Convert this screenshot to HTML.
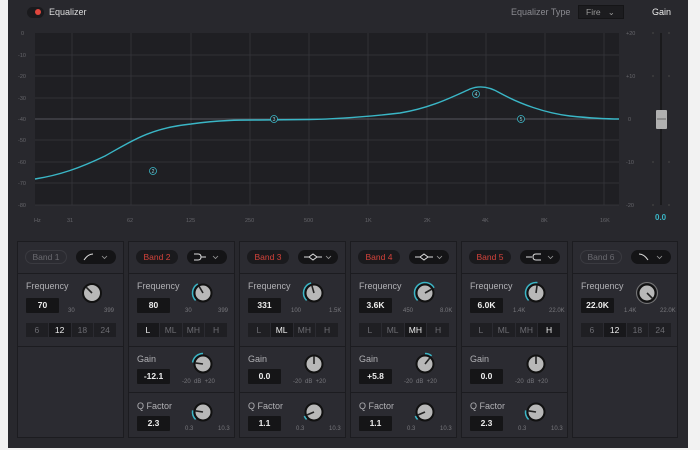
<!DOCTYPE html>
<html><head><meta charset="utf-8"><style>
*{margin:0;padding:0;box-sizing:border-box}
body{width:700px;height:450px;background:#f2f2f2;position:relative;overflow:hidden;font-family:"Liberation Sans",sans-serif}
#p{position:absolute;left:8px;top:0;width:680px;height:448px;background:#28282d}
.a{position:absolute}
.band{position:absolute;top:241px;width:107px;height:197px;background:#2b2b31;border:1px solid #1c1c20}
.sec{position:absolute;left:0;width:105px;border-top:1px solid #1c1c20}
.pill{position:absolute;left:7px;top:8px;width:42px;height:14px;border-radius:7px;background:#1a1a1d;color:#d4433b;font-size:8.5px;text-align:center;line-height:14px}
.pill.off{background:transparent;border:1px solid #3a3a40;color:#6a6a70;line-height:12px}
.drop{position:absolute;left:58px;top:8px;width:40px;height:14px;border-radius:7px;background:#141416}
.lbl{position:absolute;left:8px;font-size:9px;color:#b0b0b4}
.val{position:absolute;left:8px;width:33px;height:15px;background:#151517;color:#eee;font-size:8.5px;font-weight:bold;text-align:center;line-height:15px;border-radius:1px}
.rng{position:absolute;font-size:6px;color:#77777c}
.row{position:absolute;left:8px;top:81px;width:91px;height:14px;background:#1f1f23;display:flex}
.row span{flex:1;text-align:center;font-size:8.5px;line-height:14px;color:#6c6c72;border-right:1px solid #2b2b31}
.row span.on{background:#18181b;color:#eee}
.k{position:absolute;width:26px;height:26px}
</style></head><body>
<div id="p">
<div class="a" style="left:19px;top:7px;width:17px;height:11px;border-radius:6px;background:#1a1a1d"></div>
<div class="a" style="left:27px;top:9px;width:6px;height:6px;border-radius:3px;background:#e0463d"></div>
<div class="a" style="left:41px;top:7px;font-size:9px;color:#ddd">Equalizer</div>
<div class="a" style="left:503px;top:7px;font-size:9px;color:#8a8a90">Equalizer Type</div>
<div class="a" style="left:570px;top:5px;width:46px;height:14px;background:#1c1c1f;border:1px solid #151517;font-size:8.5px;color:#999;line-height:12px;padding-left:7px">Fire &nbsp;&nbsp;⌄</div>
<div class="a" style="left:644px;top:7px;font-size:9px;color:#eee">Gain</div>
</div>
<svg class="a" style="left:0;top:0" width="700" height="240" font-family="Liberation Sans" font-size="5.5" fill="#66666b">
<rect x="35" y="33" width="584" height="172" fill="#1f1f23"/>
<g stroke="#38383e" stroke-width="0.7">
<line x1="35" y1="55" x2="619" y2="55"/><line x1="35" y1="76" x2="619" y2="76"/><line x1="35" y1="98" x2="619" y2="98"/><line x1="35" y1="140" x2="619" y2="140"/><line x1="35" y1="162" x2="619" y2="162"/><line x1="35" y1="183" x2="619" y2="183"/><line x1="35" y1="205" x2="619" y2="205"/>
<line x1="72" y1="33" x2="72" y2="205"/><line x1="131" y1="33" x2="131" y2="205"/><line x1="191" y1="33" x2="191" y2="205"/><line x1="250" y1="33" x2="250" y2="205"/><line x1="309" y1="33" x2="309" y2="205"/><line x1="368" y1="33" x2="368" y2="205"/><line x1="427" y1="33" x2="427" y2="205"/><line x1="486" y1="33" x2="486" y2="205"/><line x1="545" y1="33" x2="545" y2="205"/><line x1="604" y1="33" x2="604" y2="205"/>
</g>
<line x1="35" y1="119" x2="619" y2="119" stroke="#6a6a70" stroke-width="0.8"/>
<g><text x="21" y="35">0</text><text x="18" y="57">-10</text><text x="18" y="78">-20</text><text x="18" y="100">-30</text><text x="18" y="121">-40</text><text x="18" y="142">-50</text><text x="18" y="164">-60</text><text x="18" y="185">-70</text><text x="18" y="207">-80</text>
<text x="34" y="222">Hz</text><text x="67" y="222">31</text><text x="127" y="222">62</text><text x="186" y="222">125</text><text x="245" y="222">250</text><text x="304" y="222">500</text><text x="365" y="222">1K</text><text x="424" y="222">2K</text><text x="482" y="222">4K</text><text x="541" y="222">8K</text><text x="600" y="222">16K</text>
<text x="626" y="35">+20</text><text x="626" y="78">+10</text><text x="628" y="121">0</text><text x="626" y="164">-10</text><text x="626" y="207">-20</text></g>
<path d="M35 179 C60 175 80 168 105 156 C130 142 150 128 191 124 C220 120 240 120 260 120 L309 119.5 C340 119 365 117 400 113 C430 108 450 98 470 89 C480 85 490 87 500 93 C520 104 545 113 570 116 C590 118 605 119 619 119" fill="none" stroke="#3ab6c6" stroke-width="1.4"/>
<g fill="#1f1f23" stroke="#3ab6c6" stroke-width="0.8" font-size="5" text-anchor="middle"><circle cx="153" cy="171" r="3.5"/><circle cx="274" cy="119" r="3.5"/><circle cx="476" cy="94" r="3.5"/><circle cx="521" cy="119" r="3.5"/></g>
<g fill="#8fd6df" font-size="5" text-anchor="middle"><text x="153" y="173">2</text><text x="274" y="121">3</text><text x="476" y="96">4</text><text x="521" y="121">5</text></g>
<line x1="661" y1="33" x2="661" y2="205" stroke="#151517" stroke-width="1.5"/>
<g stroke="#555" stroke-width="0.7"><line x1="652" y1="33" x2="654" y2="33"/><line x1="668" y1="33" x2="670" y2="33"/><line x1="652" y1="76" x2="654" y2="76"/><line x1="668" y1="76" x2="670" y2="76"/><line x1="652" y1="162" x2="654" y2="162"/><line x1="668" y1="162" x2="670" y2="162"/><line x1="652" y1="205" x2="654" y2="205"/><line x1="668" y1="205" x2="670" y2="205"/></g>
<rect x="656" y="110" width="11" height="19" rx="1" fill="#b0b0b0"/><line x1="657" y1="119" x2="666" y2="119" stroke="#666" stroke-width="1"/>
<text x="655" y="220" fill="#3ab6c6" font-size="8" font-weight="bold">0.0</text>
</svg>

<!-- Band 1 -->
<div class="band" style="left:17px">
<div class="pill off">Band 1</div><div class="drop"><svg width="40" height="14"><path d="M8 10 Q12 4 17 4" stroke="#ddd" fill="none" stroke-width="1"/><path d="M26 6 L28.5 8.5 L31 6" stroke="#999" fill="none" stroke-width="0.8"/></svg></div>
<div class="sec" style="top:31px;height:73px"></div>
<div class="lbl" style="top:39px">Frequency</div><div class="val" style="top:56px">70</div>
<svg class="k" style="left:61px;top:38px"><circle cx="13" cy="13" r="9" fill="#b8b8b8" stroke="#111" stroke-width="2"/><line x1="13" y1="13" x2="7.3" y2="7.3" stroke="#222" stroke-width="1.6"/></svg>
<div class="rng" style="top:66px;left:50px">30</div><div class="rng" style="top:66px;left:86px">399</div>
<div class="row"><span>6</span><span class="on">12</span><span>18</span><span>24</span></div>
<div class="sec" style="top:104px;height:92px"></div>
</div>

<!-- Band 2 -->
<div class="band" style="left:128px">
<div class="pill">Band 2</div><div class="drop"><svg width="40" height="14"><path d="M7 4 H11 Q14 4 14 7 Q14 10 11 10 H7 M14 7 H19" stroke="#ddd" fill="none" stroke-width="1"/><path d="M26 6 L28.5 8.5 L31 6" stroke="#999" fill="none" stroke-width="0.8"/></svg></div>
<div class="sec" style="top:31px;height:73px"></div>
<div class="lbl" style="top:39px">Frequency</div><div class="val" style="top:56px">80</div>
<svg class="k" style="left:61px;top:38px"><path d="M5.58 20.42 A10.5 10.5 0 0 1 7.75 3.91" stroke="#3ab6c6" fill="none" stroke-width="1.5"/><circle cx="13" cy="13" r="8.5" fill="#b8b8b8" stroke="#111" stroke-width="2"/><line x1="13" y1="13" x2="9" y2="6.1" stroke="#222" stroke-width="1.6"/></svg>
<div class="rng" style="top:66px;left:56px">30</div><div class="rng" style="top:66px;left:89px">399</div>
<div class="row"><span class="on">L</span><span>ML</span><span>MH</span><span>H</span></div>
<div class="sec" style="top:104px;height:46px"></div>
<div class="lbl" style="top:112px">Gain</div><div class="val" style="top:127px">-12.1</div>
<svg class="k" style="left:61px;top:109px"><path d="M13 2.5 A10.5 10.5 0 0 0 2.6 11.54" stroke="#3ab6c6" fill="none" stroke-width="1.5"/><circle cx="13" cy="13" r="8.5" fill="#b8b8b8" stroke="#111" stroke-width="2"/><line x1="13" y1="13" x2="5.1" y2="11.9" stroke="#222" stroke-width="1.6"/></svg>
<div class="rng" style="top:137px;left:53px">-20 &nbsp;dB &nbsp;+20</div>
<div class="sec" style="top:150px;height:46px"></div>
<div class="lbl" style="top:159px">Q Factor</div><div class="val" style="top:174px">2.3</div>
<svg class="k" style="left:61px;top:157px"><path d="M5.58 20.42 A10.5 10.5 0 0 1 2.63 11.36" stroke="#3ab6c6" fill="none" stroke-width="1.5"/><circle cx="13" cy="13" r="8.5" fill="#b8b8b8" stroke="#111" stroke-width="2"/><line x1="13" y1="13" x2="5.1" y2="11.8" stroke="#222" stroke-width="1.6"/></svg>
<div class="rng" style="top:184px;left:56px">0.3</div><div class="rng" style="top:184px;left:89px">10.3</div>
</div>

<!-- Band 3 -->
<div class="band" style="left:239px">
<div class="pill">Band 3</div><div class="drop"><svg width="40" height="14"><path d="M6 7 H11 M19 7 H24" stroke="#ddd" stroke-width="1"/><path d="M11 7 L15 4 L19 7 L15 10 Z" stroke="#ddd" fill="none" stroke-width="1"/><path d="M28 6 L30.5 8.5 L33 6" stroke="#999" fill="none" stroke-width="0.8"/></svg></div>
<div class="sec" style="top:31px;height:73px"></div>
<div class="lbl" style="top:39px">Frequency</div><div class="val" style="top:56px">331</div>
<svg class="k" style="left:61px;top:38px"><path d="M5.58 20.42 A10.5 10.5 0 0 1 10.1 2.91" stroke="#3ab6c6" fill="none" stroke-width="1.5"/><circle cx="13" cy="13" r="8.5" fill="#b8b8b8" stroke="#111" stroke-width="2"/><line x1="13" y1="13" x2="10.8" y2="5.3" stroke="#222" stroke-width="1.6"/></svg>
<div class="rng" style="top:66px;left:51px">100</div><div class="rng" style="top:66px;left:89px">1.5K</div>
<div class="row"><span>L</span><span class="on">ML</span><span>MH</span><span>H</span></div>
<div class="sec" style="top:104px;height:46px"></div>
<div class="lbl" style="top:112px">Gain</div><div class="val" style="top:127px">0.0</div>
<svg class="k" style="left:61px;top:109px"><circle cx="13" cy="13" r="8.5" fill="#b8b8b8" stroke="#111" stroke-width="2"/><line x1="13" y1="13" x2="13" y2="5" stroke="#222" stroke-width="1.6"/></svg>
<div class="rng" style="top:137px;left:53px">-20 &nbsp;dB &nbsp;+20</div>
<div class="sec" style="top:150px;height:46px"></div>
<div class="lbl" style="top:159px">Q Factor</div><div class="val" style="top:174px">1.1</div>
<svg class="k" style="left:61px;top:157px"><path d="M5.58 20.42 A10.5 10.5 0 0 1 3.33 17.1" stroke="#3ab6c6" fill="none" stroke-width="1.5"/><circle cx="13" cy="13" r="8.5" fill="#b8b8b8" stroke="#111" stroke-width="2"/><line x1="13" y1="13" x2="5.6" y2="16.1" stroke="#222" stroke-width="1.6"/></svg>
<div class="rng" style="top:184px;left:56px">0.3</div><div class="rng" style="top:184px;left:89px">10.3</div>
</div>

<!-- Band 4 -->
<div class="band" style="left:350px">
<div class="pill">Band 4</div><div class="drop"><svg width="40" height="14"><path d="M6 7 H11 M19 7 H24" stroke="#ddd" stroke-width="1"/><path d="M11 7 L15 4 L19 7 L15 10 Z" stroke="#ddd" fill="none" stroke-width="1"/><path d="M28 6 L30.5 8.5 L33 6" stroke="#999" fill="none" stroke-width="0.8"/></svg></div>
<div class="sec" style="top:31px;height:73px"></div>
<div class="lbl" style="top:39px">Frequency</div><div class="val" style="top:56px">3.6K</div>
<svg class="k" style="left:61px;top:38px"><path d="M5.58 20.42 A10.5 10.5 0 1 1 22.09 7.75" stroke="#3ab6c6" fill="none" stroke-width="1.5"/><circle cx="13" cy="13" r="8.5" fill="#b8b8b8" stroke="#111" stroke-width="2"/><line x1="13" y1="13" x2="19.9" y2="9" stroke="#222" stroke-width="1.6"/></svg>
<div class="rng" style="top:66px;left:52px">450</div><div class="rng" style="top:66px;left:89px">8.0K</div>
<div class="row"><span>L</span><span>ML</span><span class="on">MH</span><span>H</span></div>
<div class="sec" style="top:104px;height:46px"></div>
<div class="lbl" style="top:112px">Gain</div><div class="val" style="top:127px">+5.8</div>
<svg class="k" style="left:61px;top:109px"><path d="M13 2.5 A10.5 10.5 0 0 1 19.61 4.84" stroke="#3ab6c6" fill="none" stroke-width="1.5"/><circle cx="13" cy="13" r="8.5" fill="#b8b8b8" stroke="#111" stroke-width="2"/><line x1="13" y1="13" x2="18" y2="6.8" stroke="#222" stroke-width="1.6"/></svg>
<div class="rng" style="top:137px;left:53px">-20 &nbsp;dB &nbsp;+20</div>
<div class="sec" style="top:150px;height:46px"></div>
<div class="lbl" style="top:159px">Q Factor</div><div class="val" style="top:174px">1.1</div>
<svg class="k" style="left:61px;top:157px"><path d="M5.58 20.42 A10.5 10.5 0 0 1 3.33 17.1" stroke="#3ab6c6" fill="none" stroke-width="1.5"/><circle cx="13" cy="13" r="8.5" fill="#b8b8b8" stroke="#111" stroke-width="2"/><line x1="13" y1="13" x2="5.6" y2="16.1" stroke="#222" stroke-width="1.6"/></svg>
<div class="rng" style="top:184px;left:56px">0.3</div><div class="rng" style="top:184px;left:89px">10.3</div>
</div>

<!-- Band 5 -->
<div class="band" style="left:461px">
<div class="pill">Band 5</div><div class="drop"><svg width="40" height="14"><path d="M6 7 H12 M21 4 H16 Q13 4 13 7 Q13 10 16 10 H21" stroke="#ddd" fill="none" stroke-width="1"/><path d="M28 6 L30.5 8.5 L33 6" stroke="#999" fill="none" stroke-width="0.8"/></svg></div>
<div class="sec" style="top:31px;height:73px"></div>
<div class="lbl" style="top:39px">Frequency</div><div class="val" style="top:56px">6.0K</div>
<svg class="k" style="left:61px;top:38px"><path d="M5.58 20.42 A10.5 10.5 0 0 1 14.46 2.6" stroke="#3ab6c6" fill="none" stroke-width="1.5"/><circle cx="13" cy="13" r="8.5" fill="#b8b8b8" stroke="#111" stroke-width="2"/><line x1="13" y1="13" x2="14.1" y2="5.1" stroke="#222" stroke-width="1.6"/></svg>
<div class="rng" style="top:66px;left:51px">1.4K</div><div class="rng" style="top:66px;left:87px">22.0K</div>
<div class="row"><span>L</span><span>ML</span><span>MH</span><span class="on">H</span></div>
<div class="sec" style="top:104px;height:46px"></div>
<div class="lbl" style="top:112px">Gain</div><div class="val" style="top:127px">0.0</div>
<svg class="k" style="left:61px;top:109px"><circle cx="13" cy="13" r="8.5" fill="#b8b8b8" stroke="#111" stroke-width="2"/><line x1="13" y1="13" x2="13" y2="5" stroke="#222" stroke-width="1.6"/></svg>
<div class="rng" style="top:137px;left:53px">-20 &nbsp;dB &nbsp;+20</div>
<div class="sec" style="top:150px;height:46px"></div>
<div class="lbl" style="top:159px">Q Factor</div><div class="val" style="top:174px">2.3</div>
<svg class="k" style="left:61px;top:157px"><path d="M5.58 20.42 A10.5 10.5 0 0 1 2.63 11.36" stroke="#3ab6c6" fill="none" stroke-width="1.5"/><circle cx="13" cy="13" r="8.5" fill="#b8b8b8" stroke="#111" stroke-width="2"/><line x1="13" y1="13" x2="5.1" y2="11.8" stroke="#222" stroke-width="1.6"/></svg>
<div class="rng" style="top:184px;left:56px">0.3</div><div class="rng" style="top:184px;left:89px">10.3</div>
</div>

<!-- Band 6 -->
<div class="band" style="left:572px;width:106px">
<div class="pill off">Band 6</div><div class="drop"><svg width="40" height="14"><path d="M8 4 Q13 4 17 10" stroke="#ddd" fill="none" stroke-width="1"/><path d="M26 6 L28.5 8.5 L31 6" stroke="#999" fill="none" stroke-width="0.8"/></svg></div>
<div class="sec" style="top:31px;height:73px"></div>
<div class="lbl" style="top:39px">Frequency</div><div class="val" style="top:56px">22.0K</div>
<svg class="k" style="left:61px;top:38px"><circle cx="13" cy="13" r="10.5" fill="none" stroke="#777" stroke-width="1"/><circle cx="13" cy="13" r="8.5" fill="#b8b8b8" stroke="#111" stroke-width="2"/><line x1="13" y1="13" x2="18.7" y2="18.7" stroke="#222" stroke-width="1.6"/></svg>
<div class="rng" style="top:66px;left:51px">1.4K</div><div class="rng" style="top:66px;left:87px">22.0K</div>
<div class="row"><span>6</span><span class="on">12</span><span>18</span><span>24</span></div>
<div class="sec" style="top:104px;height:92px"></div>
</div>
</body></html>
